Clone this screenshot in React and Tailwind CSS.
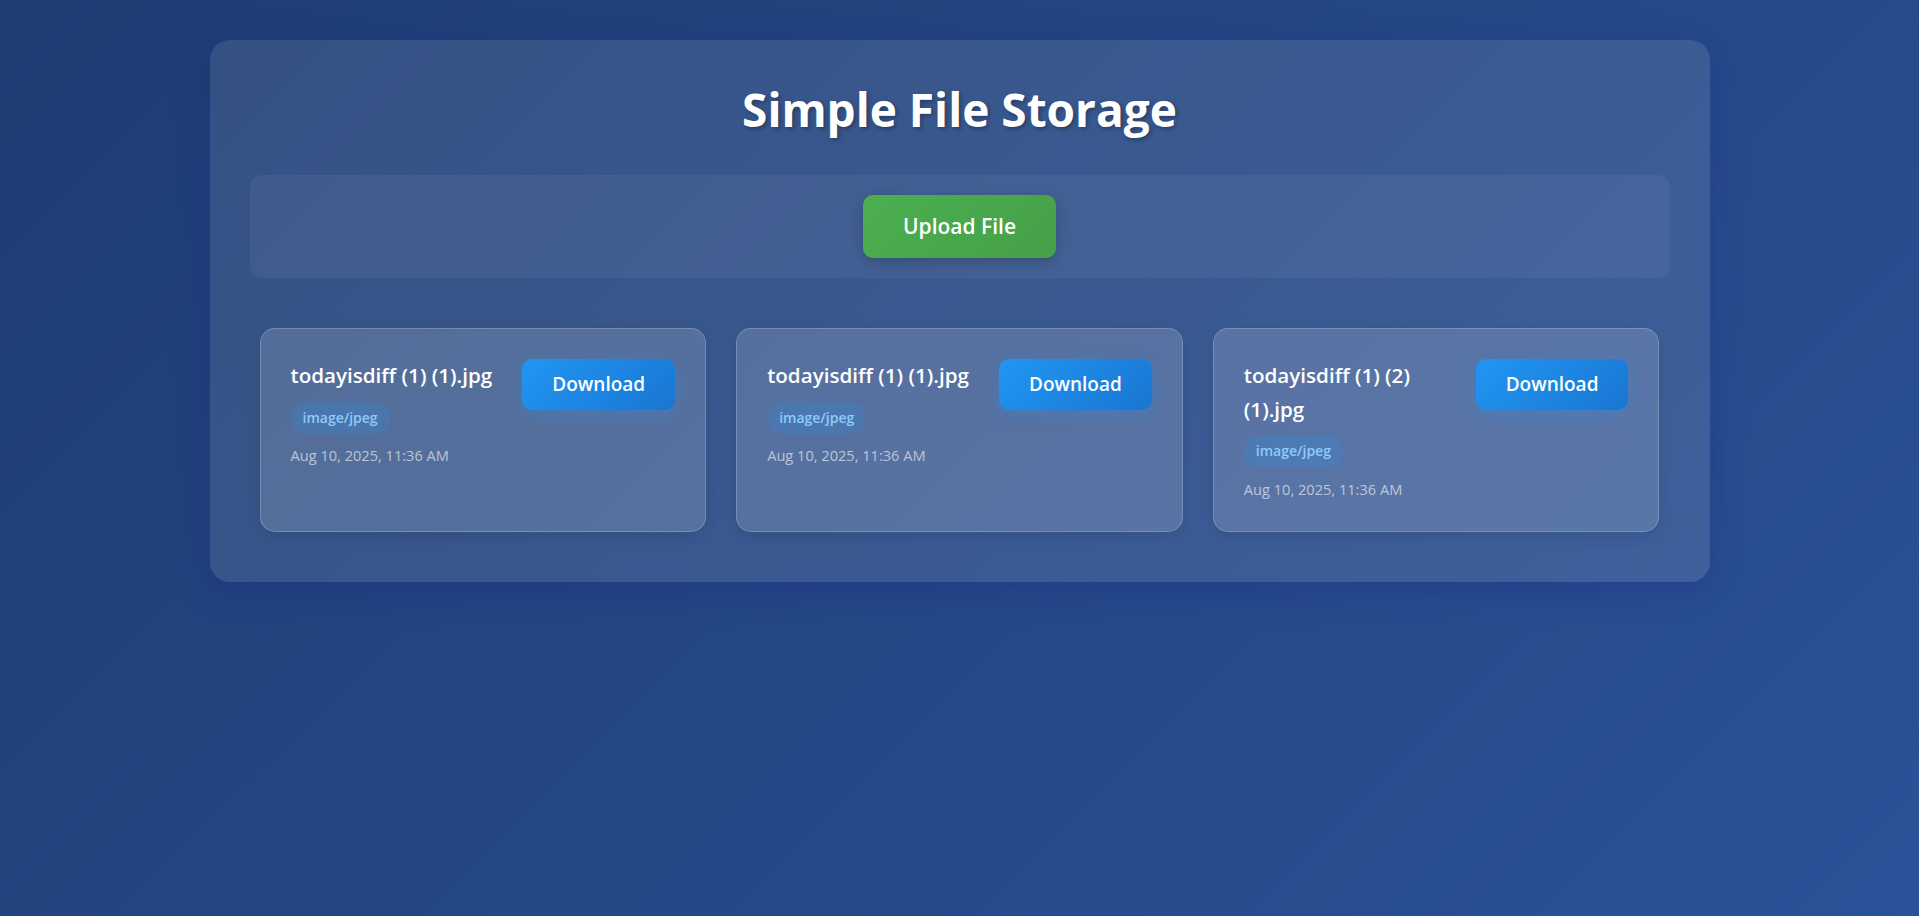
const files = [
  { name: 'todayisdiff (1) (1).jpg', type: 'image/jpeg', date: 'Aug 10, 2025, 11:36 AM' },
  { name: 'todayisdiff (1) (1).jpg', type: 'image/jpeg', date: 'Aug 10, 2025, 11:36 AM' },
  { name: 'todayisdiff (1) (2) (1).jpg', type: 'image/jpeg', date: 'Aug 10, 2025, 11:36 AM' },
];

const FileCard = ({ file }) => (
  <div className="rounded-[15px] border border-white/20 bg-white/15 p-[30px] shadow-[0_4px_15px_rgba(0,0,0,0.1)]">
    <div className="flex items-start justify-between gap-[15px]">
      <div className="min-w-0 flex-1">
        <div className="text-[20.6px] font-semibold leading-[1.63] text-white">{file.name}</div>
        <span className="mt-[9px] inline-block rounded-full bg-[rgba(33,150,243,0.2)] px-3 py-[5px] text-[14px] font-semibold leading-[1.6] text-[#90caf9]">
          {file.type}
        </span>
        <div className="mt-[10px] text-[14.6px] leading-[1.6] text-white/60">{file.date}</div>
      </div>
      <button className="shrink-0 rounded-[10px] bg-[linear-gradient(135deg,#2196f3,#1976d2)] px-[30px] py-[10px] text-[19px] font-semibold leading-[1.6] text-white shadow-[0_4px_15px_rgba(33,150,243,0.3)]">
        Download
      </button>
    </div>
  </div>
);

export default function App() {
  return (
    <div className="min-h-screen bg-[linear-gradient(135deg,#1e3c72_0%,#2a5298_100%)] pt-[40px] font-['Open_Sans',sans-serif]">
      <div className="mx-auto w-[1500px] rounded-[20px] bg-white/10 px-[40px] pb-[40px] pt-[33px] shadow-[0_8px_32px_0_rgba(31,38,135,0.37)]">
        <h1 className="mb-[28px] text-center text-[46px] font-bold leading-[1.6] text-white [text-shadow:2px_2px_4px_rgba(0,0,0,0.3)]">
          Simple File Storage
        </h1>

        <div className="mb-[40px] flex justify-center rounded-[12px] bg-white/5 py-[20px]">
          <button className="rounded-[10px] bg-[linear-gradient(135deg,#4caf50,#45a049)] px-[40px] py-[15px] text-[21px] font-semibold leading-[1.6] text-white shadow-[0_4px_15px_rgba(0,0,0,0.2)]">
            Upload File
          </button>
        </div>

        <div className="grid grid-cols-3 gap-[30px] p-[10px]">
          {files.map((f, i) => (
            <FileCard key={i} file={f} />
          ))}
        </div>
      </div>
    </div>
  );
}
